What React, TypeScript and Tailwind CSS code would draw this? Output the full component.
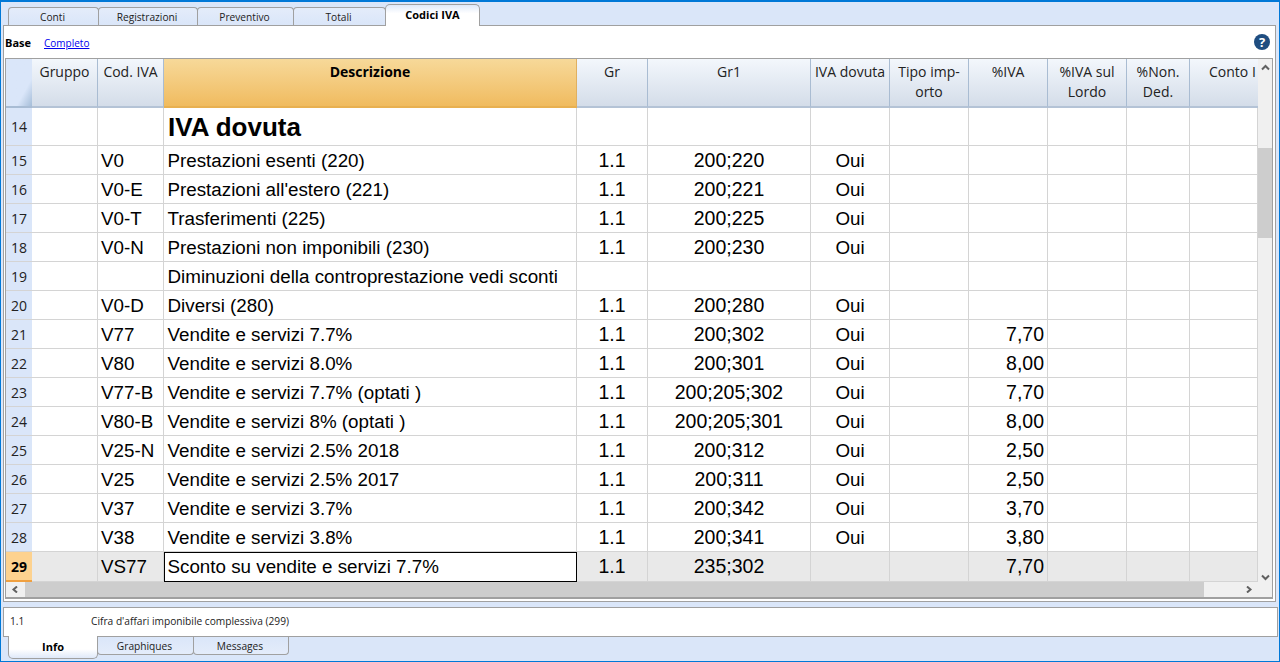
import React from 'react';

const COLS = 'grid grid-cols-[26px_66px_66px_413px_71px_163px_79px_79px_79px_79px_63px_68px]';

interface VatRow {
  n: number;
  code?: string;
  desc: string;
  gr1?: string;
  due?: boolean;
  rate?: string;
}

const rows: VatRow[] = [
  { n: 15, code: 'V0', desc: 'Prestazioni esenti (220)', gr1: '200;220', due: true },
  { n: 16, code: 'V0-E', desc: "Prestazioni all'estero (221)", gr1: '200;221', due: true },
  { n: 17, code: 'V0-T', desc: 'Trasferimenti (225)', gr1: '200;225', due: true },
  { n: 18, code: 'V0-N', desc: 'Prestazioni non imponibili (230)', gr1: '200;230', due: true },
  { n: 19, desc: 'Diminuzioni della controprestazione vedi sconti' },
  { n: 20, code: 'V0-D', desc: 'Diversi (280)', gr1: '200;280', due: true },
  { n: 21, code: 'V77', desc: 'Vendite e servizi 7.7%', gr1: '200;302', due: true, rate: '7,70' },
  { n: 22, code: 'V80', desc: 'Vendite e servizi 8.0%', gr1: '200;301', due: true, rate: '8,00' },
  { n: 23, code: 'V77-B', desc: 'Vendite e servizi 7.7% (optati )', gr1: '200;205;302', due: true, rate: '7,70' },
  { n: 24, code: 'V80-B', desc: 'Vendite e servizi 8% (optati )', gr1: '200;205;301', due: true, rate: '8,00' },
  { n: 25, code: 'V25-N', desc: 'Vendite e servizi 2.5% 2018', gr1: '200;312', due: true, rate: '2,50' },
  { n: 26, code: 'V25', desc: 'Vendite e servizi 2.5% 2017', gr1: '200;311', due: true, rate: '2,50' },
  { n: 27, code: 'V37', desc: 'Vendite e servizi 3.7%', gr1: '200;342', due: true, rate: '3,70' },
  { n: 28, code: 'V38', desc: 'Vendite e servizi 3.8%', gr1: '200;341', due: true, rate: '3,80' },
];

const Tab: React.FC<{ label: string; width: string }> = ({ label, width }) => (
  <div className={`${width} h-[18px] -mr-px border border-b-0 border-[#a0a0a0] rounded-t-[4px] bg-gradient-to-b from-[#e4ecfa] to-[#dae6f9] flex items-center justify-center pt-[2px] pr-[2px] text-[10.2px] text-[#222]`}>
    {label}
  </div>
);

const BottomTab: React.FC<{ label: string; width: string }> = ({ label, width }) => (
  <div className={`${width} h-[18px] -mr-px border border-t-0 border-[#a0a0a0] rounded-b-[4px] bg-gradient-to-b from-[#dae6f9] to-[#e4ecfa] flex items-center justify-center pt-[2px] pr-[2px] text-[10.2px] text-[#222]`}>
    {label}
  </div>
);

const HeadCell: React.FC<{ children?: React.ReactNode; className?: string }> = ({ children, className = '' }) => (
  <div className={`h-[49px] border-r border-[#a9bcd2] border-b-[2px] border-b-[#b4c3d6] bg-gradient-to-b from-[#f3f7fc] to-[#d4dde9] pt-[3px] text-center text-[14px] leading-5 text-[#222] overflow-hidden whitespace-nowrap ${className}`}>
    {children}
  </div>
);

const Cell: React.FC<{ children?: React.ReactNode; className?: string }> = ({ children, className = '' }) => (
  <div className={`border-r border-b border-[#d4d4d4] flex items-center overflow-hidden whitespace-nowrap pt-[2px] text-[18.8px] text-black font-['Liberation_Sans',sans-serif] ${className}`}>
    {children}
  </div>
);

const NumCell: React.FC<{ n: number }> = ({ n }) => (
  <div className="border-b border-[#d4d4d4] bg-[#dae6f9] flex items-center justify-center text-[14px] text-[#222]">{n}</div>
);

const Chevron: React.FC<{ d: string }> = ({ d }) => (
  <svg width="9" height="7" viewBox="0 0 9 7" className="shrink-0">
    <path d={d} fill="none" stroke="#606060" strokeWidth="2" />
  </svg>
);

const App: React.FC = () => {
  return (
    <div className="w-[1280px] h-[662px] overflow-hidden bg-[#dae6f9] border border-[#0078d7] border-t-2 flex flex-col font-['Open_Sans',sans-serif]">
      {/* Top tabs */}
      <div className="h-[23px] shrink-0 pl-[7px] flex items-end">
        <Tab label="Conti" width="w-[91px]" />
        <Tab label="Registrazioni" width="w-[100px]" />
        <Tab label="Preventivo" width="w-[97px]" />
        <Tab label="Totali" width="w-[93px]" />
        <div className="w-[95px] h-[22px] border border-b-0 border-[#a0a0a0] rounded-t-[5px] bg-gradient-to-b from-[#dfe9f9] to-white to-40% flex items-center justify-center text-[11px] font-bold text-black relative z-10 -mb-px">
          Codici IVA
        </div>
      </div>

      {/* Main panel */}
      <div className="mx-[2px] w-[1273px] h-[577px] shrink-0 border border-[#a0a0a0] bg-white flex flex-col">
        <div className="h-[32px] shrink-0 pl-[1px] pr-[5px] flex items-center text-[11px]">
          <span className="font-bold text-black w-[39px] pt-[2px]">Base</span>
          <span className="text-[#0000ee] underline text-[10px] pt-[2px]">Completo</span>
          <div className="ml-auto w-4 h-4 rounded-full bg-[#1f4d80] flex items-center justify-center text-white text-[13px] font-bold leading-none">?</div>
        </div>

        <div className="mx-[1px] w-[1268px] h-[541px] border border-[#a0a0a0] border-b-2 flex">
          <div className="w-[1252px] flex flex-col">
            <div className="h-[524px] overflow-hidden">
              {/* Header */}
              <div className={COLS}>
                <div className="h-[49px] border-b-[2px] border-b-[#a8bcd4] bg-gradient-to-br from-[#dae6f9] from-70% to-[#a5bdd8]" />
                <HeadCell>Gruppo</HeadCell>
                <HeadCell>Cod. IVA</HeadCell>
                <div className="h-[49px] border-r border-[#e0b060] border-b-[2px] border-b-[#e8b050] bg-gradient-to-b from-[#f7d999] to-[#f0bb5e] pt-[3px] text-center text-[14px] leading-5 font-bold text-black">Descrizione</div>
                <HeadCell>Gr</HeadCell>
                <HeadCell>Gr1</HeadCell>
                <HeadCell>IVA dovuta</HeadCell>
                <HeadCell>Tipo imp-<br />orto</HeadCell>
                <HeadCell>%IVA</HeadCell>
                <HeadCell>%IVA sul<br />Lordo</HeadCell>
                <HeadCell>%Non.<br />Ded.</HeadCell>
                <HeadCell className="border-r-0 text-left pl-[19px]">Conto I</HeadCell>
              </div>

              {/* Title row */}
              <div className={`${COLS} h-[38px]`}>
                <NumCell n={14} />
                <Cell />
                <Cell />
                <Cell className="pl-1 text-[26px] font-bold">IVA dovuta</Cell>
                {Array.from({ length: 8 }, (_, i) => <Cell key={i} />)}
              </div>

              {rows.map((row) => (
                <div key={row.n} className={`${COLS} h-[29px]`}>
                  <NumCell n={row.n} />
                  <Cell />
                  <Cell className="pl-[3px]">{row.code}</Cell>
                  <Cell className="pl-[3.5px]">{row.desc}</Cell>
                  <Cell className="justify-center text-[19.5px]">{row.code ? '1.1' : ''}</Cell>
                  <Cell className="justify-center text-[19.5px]">{row.gr1}</Cell>
                  <Cell className="justify-center">{row.due ? 'Oui' : ''}</Cell>
                  <Cell />
                  <Cell className="justify-end pr-[3px] text-[19.5px]">{row.rate}</Cell>
                  <Cell />
                  <Cell />
                  <Cell />
                </div>
              ))}

              {/* Current row */}
              <div className={`${COLS} h-[29px] bg-[#e9e9e9]`}>
                <div className="border-b-2 border-[#f0a040] bg-[#fdd28f] flex items-center justify-center text-[14px] font-bold text-black">29</div>
                <Cell />
                <Cell className="pl-[3px] !pt-0">VS77</Cell>
                <div className="bg-white border border-black flex items-center pl-[2.5px] text-[18.8px] text-black font-['Liberation_Sans',sans-serif] whitespace-nowrap">Sconto su vendite e servizi 7.7%</div>
                <Cell className="justify-center text-[19.5px] !pt-0">1.1</Cell>
                <Cell className="justify-center text-[19.5px] !pt-0">235;302</Cell>
                <Cell />
                <Cell />
                <Cell className="justify-end pr-[3px] text-[19.5px] !pt-0">7,70</Cell>
                <Cell />
                <Cell />
                <Cell />
              </div>
            </div>

            {/* Horizontal scrollbar */}
            <div className="h-[15px] bg-[#f0f0f0] flex items-center">
              <div className="w-[19px] flex justify-center"><Chevron d="M6 0.5 L2.5 3.5 L6 6.5" /></div>
              <div className="w-[1179px] h-full bg-[#cdcdcd]" />
              <div className="ml-auto w-[19px] flex justify-center"><Chevron d="M3 0.5 L6.5 3.5 L3 6.5" /></div>
            </div>
          </div>

          {/* Vertical scrollbar */}
          <div className="w-[15px] bg-[#f0f0f0] flex flex-col items-center">
            <div className="h-[16px] pt-[5px]"><Chevron d="M1 5.5 L4.5 2 L8 5.5" /></div>
            <div className="h-[73px]" />
            <div className="w-full h-[90px] bg-[#cdcdcd]" />
            <div className="mt-[336px]"><Chevron d="M1 1.5 L4.5 5 L8 1.5" /></div>
          </div>
        </div>
      </div>

      {/* Info panel */}
      <div className="mt-[5px] mx-[2px] w-[1275px] h-[30px] shrink-0 border border-[#a0a0a0] bg-white flex items-center pb-px text-[10.2px] text-[#222]">
        <span className="pl-[6px] w-[87px]">1.1</span>
        <span>Cifra d'affari imponibile complessiva (299)</span>
      </div>

      {/* Bottom tabs */}
      <div className="pl-[7px] flex items-start">
        <div className="w-[90px] h-[23px] -mt-px mr-[-1px] border border-t-0 border-[#a0a0a0] rounded-b-[5px] bg-gradient-to-t from-[#dfe9f9] to-white to-40% flex items-center justify-center text-[11px] font-bold text-black relative z-10">
          Info
        </div>
        <BottomTab label="Graphiques" width="w-[97px]" />
        <BottomTab label="Messages" width="w-[96px]" />
      </div>
    </div>
  );
};

export default App;
